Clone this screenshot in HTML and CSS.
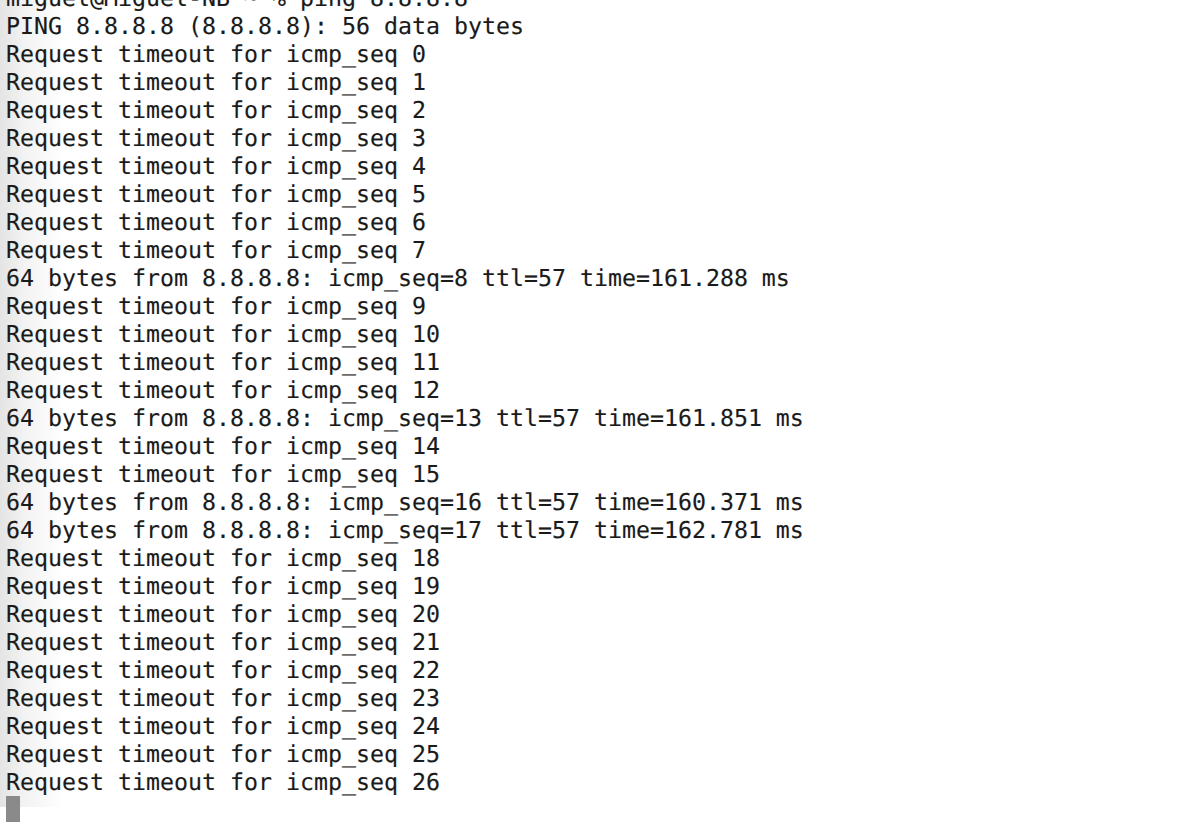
FILE: index.html
```html
<!DOCTYPE html>
<html>
<head>
<meta charset="utf-8">
<link rel="stylesheet" href="styles.css">
</head>
<body>
<div class="term">
<pre class="out">miguel@Miguel-NB ~ % ping 8.8.8.8
PING 8.8.8.8 (8.8.8.8): 56 data bytes
Request timeout for icmp_seq 0
Request timeout for icmp_seq 1
Request timeout for icmp_seq 2
Request timeout for icmp_seq 3
Request timeout for icmp_seq 4
Request timeout for icmp_seq 5
Request timeout for icmp_seq 6
Request timeout for icmp_seq 7
64 bytes from 8.8.8.8: icmp_seq=8 ttl=57 time=161.288 ms
Request timeout for icmp_seq 9
Request timeout for icmp_seq 10
Request timeout for icmp_seq 11
Request timeout for icmp_seq 12
64 bytes from 8.8.8.8: icmp_seq=13 ttl=57 time=161.851 ms
Request timeout for icmp_seq 14
Request timeout for icmp_seq 15
64 bytes from 8.8.8.8: icmp_seq=16 ttl=57 time=160.371 ms
64 bytes from 8.8.8.8: icmp_seq=17 ttl=57 time=162.781 ms
Request timeout for icmp_seq 18
Request timeout for icmp_seq 19
Request timeout for icmp_seq 20
Request timeout for icmp_seq 21
Request timeout for icmp_seq 22
Request timeout for icmp_seq 23
Request timeout for icmp_seq 24
Request timeout for icmp_seq 25
Request timeout for icmp_seq 26
<span class="cursor"> </span></pre>
</div>
</body>
</html>
```
FILE: styles.css
```css
html, body {
  margin: 0;
  padding: 0;
  height: 100%;
  overflow: hidden;
  background: #ffffff;
}
.term {
  height: 100%;
  background: linear-gradient(to right, #e4e4e4 0px, #f3f3f3 25px, #ffffff 65px);
  padding-left: 6px;
  box-sizing: border-box;
}
.out {
  margin: -15px 0 0 0;
  font-family: "DejaVu Sans Mono", monospace;
  font-size: 23.25px;
  line-height: 28px;
  color: #1a1a1a;
  white-space: pre;
  text-rendering: geometricPrecision;
  -webkit-text-stroke: 0.15px #1a1a1a;
}
.cursor {
  display: inline-block;
  width: 14px;
  height: 27px;
  margin-top: -1px;
  background: #8a8a8a;
  vertical-align: top;
  -webkit-text-stroke: 0;
}
```
